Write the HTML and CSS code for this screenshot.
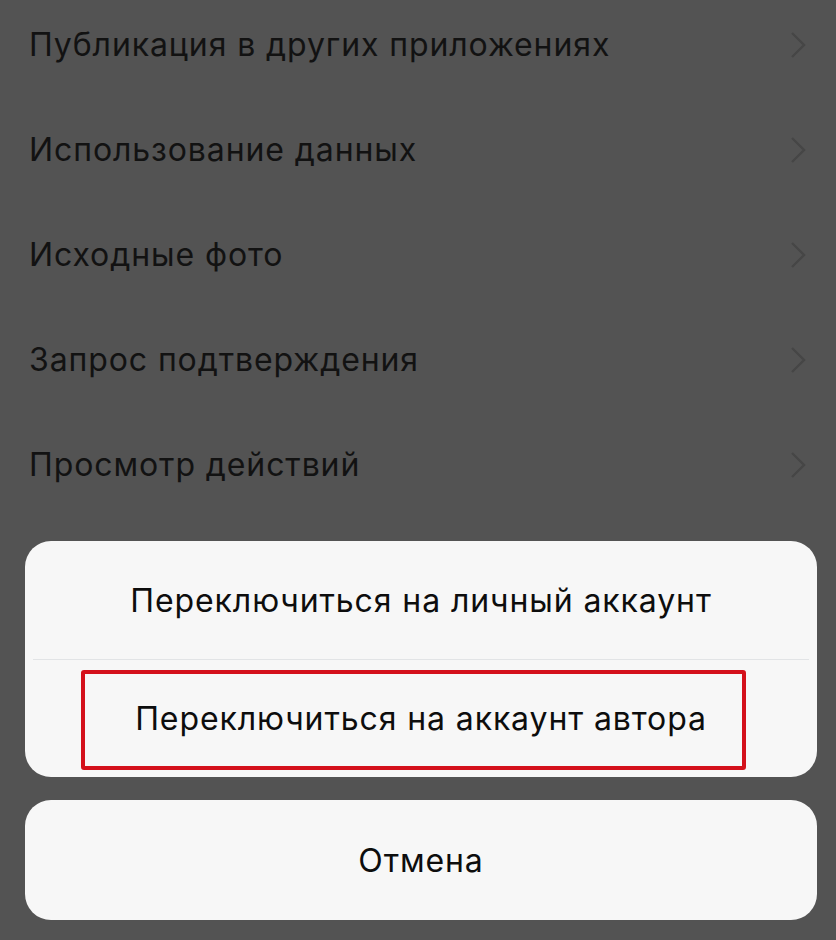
FILE: index.html
```html
<!DOCTYPE html>
<html lang="ru">
<head>
<meta charset="utf-8">
<link rel="stylesheet" href="styles.css">
</head>
<body>
<ul class="list">
  <li class="row"><span class="label">Публикация в других приложениях</span><svg class="chev" viewBox="0 0 16 28"><path d="M2 2 L14 14 L2 26"/></svg></li>
  <li class="row"><span class="label">Использование данных</span><svg class="chev" viewBox="0 0 16 28"><path d="M2 2 L14 14 L2 26"/></svg></li>
  <li class="row"><span class="label">Исходные фото</span><svg class="chev" viewBox="0 0 16 28"><path d="M2 2 L14 14 L2 26"/></svg></li>
  <li class="row"><span class="label">Запрос подтверждения</span><svg class="chev" viewBox="0 0 16 28"><path d="M2 2 L14 14 L2 26"/></svg></li>
  <li class="row"><span class="label">Просмотр действий</span><svg class="chev" viewBox="0 0 16 28"><path d="M2 2 L14 14 L2 26"/></svg></li>
</ul>
<div class="sheet">
  <div class="card">
    <div class="btn btn-first">Переключиться на личный аккаунт</div>
    <div class="divider"></div>
    <div class="btn btn-second">Переключиться на аккаунт автора<span class="mark"></span></div>
  </div>
  <div class="card cancel">
    <div class="btn btn-cancel">Отмена</div>
  </div>
</div>
</body>
</html>
```
FILE: styles.css
```css
html, body {
  margin: 0;
  padding: 0;
  width: 836px;
  height: 940px;
  overflow: hidden;
  background: #535353;
  font-family: Inter, "Noto Sans", "Liberation Sans", sans-serif;
}
.list {
  list-style: none;
  margin: -8px 0 0 0;
  padding: 0;
}
.row {
  height: 105px;
  display: flex;
  align-items: center;
  justify-content: space-between;
  padding: 0 30px 0 29px;
}
.label {
  font-size: 32px;
  color: #121212;
  letter-spacing: 0.9px;
}
.chev {
  width: 16px;
  height: 28px;
}
.chev path {
  fill: none;
  stroke: #464646;
  stroke-width: 2.4;
}
.sheet {
  position: absolute;
  left: 25px;
  width: 792px;
  bottom: 20px;
  display: flex;
  flex-direction: column;
  gap: 23px;
}
.card {
  background: #f7f7f7;
  border-radius: 26px;
  overflow: hidden;
}
.btn {
  display: flex;
  align-items: center;
  justify-content: center;
  font-size: 32px;
  letter-spacing: 0.9px;
  color: #0d0d0d;
  position: relative;
}
.btn-first { height: 118px; }
.btn-second { height: 117px; }
.btn-cancel { height: 120px; }
.divider {
  height: 1px;
  background: #e2e4e6;
  margin: 0 8px;
}
.mark {
  position: absolute;
  left: 56px;
  top: 10px;
  width: 665px;
  height: 100px;
  box-sizing: border-box;
  border: 4px solid #d4111b;
  border-radius: 3px;
}
```
